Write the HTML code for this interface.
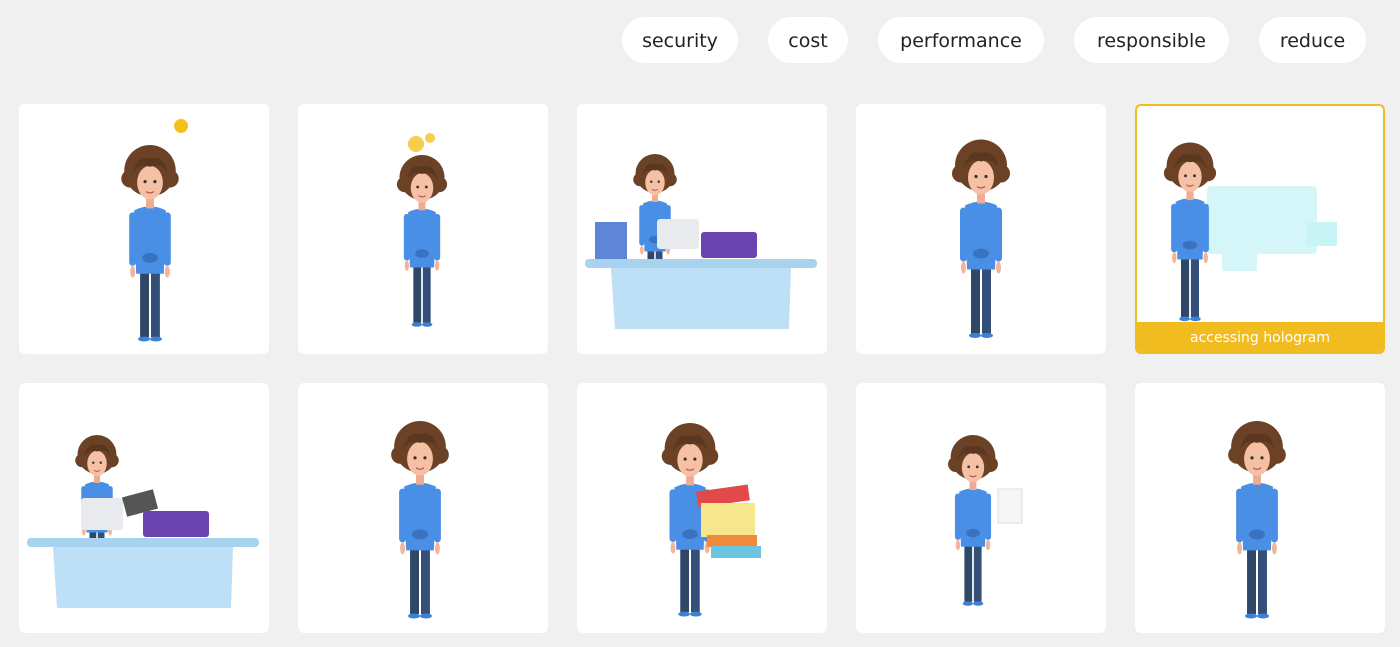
<!DOCTYPE html>
<html><head><meta charset="utf-8"><style>
*{margin:0;padding:0;box-sizing:border-box}
body{width:1400px;height:647px;background:#f0f0f0;position:relative;overflow:hidden;font-family:"DejaVu Sans","Liberation Sans",sans-serif}
.pill{position:absolute;top:17px;height:46px;border-radius:23px;background:#fff;color:#222;font-size:19px;line-height:48px;text-align:center}
.card{position:absolute;width:250px;height:250px;background:#fff;border-radius:6px;overflow:hidden}
.card svg{position:absolute;left:0;top:0}
.sel{border:2px solid #f0bc20}
.lab{position:absolute;left:0;right:0;bottom:0;height:30px;background:#f0bc1f;color:#fff;font-size:14px;line-height:32px;text-align:center}
</style></head><body>
<svg width="0" height="0" style="position:absolute">
<defs>
<symbol id="p" viewBox="0 0 60 200">
<rect x="20" y="128" width="9" height="66" fill="#2f4868"/><rect x="31" y="128" width="9" height="66" fill="#34507a"/>
<ellipse cx="24" cy="196" rx="6" ry="2.5" fill="#3b82d6"/><ellipse cx="36" cy="196" rx="6" ry="2.5" fill="#3b82d6"/>
<rect x="9" y="68" width="7" height="54" rx="3.5" fill="#4a8fe6"/><rect x="44" y="68" width="7" height="54" rx="3.5" fill="#4a8fe6"/>
<ellipse cx="12.5" cy="128" rx="2.5" ry="6" fill="#f3b49a"/><ellipse cx="47.5" cy="128" rx="2.5" ry="6" fill="#f3b49a"/>
<path d="M14 66 Q30 58 46 66 L44 130 L16 130 Z" fill="#4a8fe6"/>
<ellipse cx="30" cy="114" rx="8" ry="5" fill="#3a72c0"/>
<rect x="26" y="50" width="8" height="14" fill="#f0ac90"/>
<circle cx="30" cy="26" r="26" fill="#6b4226"/>
<circle cx="10" cy="34" r="9" fill="#6b4226"/><circle cx="50" cy="34" r="9" fill="#6b4226"/>
<ellipse cx="30" cy="38" rx="13" ry="17" fill="#f6c0a4"/>
<path d="M12 30 Q18 8 30 14 Q44 8 48 30 Q44 18 30 22 Q18 18 12 30Z" fill="#5a371e"/>
<circle cx="25" cy="37" r="1.6" fill="#333"/><circle cx="35" cy="37" r="1.6" fill="#333"/>
<path d="M26 47 Q30 50 34 47" stroke="#a55" stroke-width="1.2" fill="none"/>
</symbol>
<symbol id="desk" viewBox="0 0 232 70">
<rect x="0" y="0" width="232" height="9" rx="4" fill="#a8d3ef"/>
<path d="M26 9 H206 L204 70 H30Z" fill="#bde0f6"/>
</symbol>
</defs></svg>

<div class="pill" style="left:622px;width:116px">security</div>
<div class="pill" style="left:768px;width:80px">cost</div>
<div class="pill" style="left:878px;width:166px">performance</div>
<div class="pill" style="left:1074px;width:155px">responsible</div>
<div class="pill" style="left:1259px;width:107px">reduce</div>

<div class="card" style="left:19px;top:104px"><svg width="250" height="250">
<circle cx="162" cy="22" r="7" fill="#f4c020"/><use href="#p" x="101" y="41" width="60" height="198"/></svg></div>

<div class="card" style="left:298px;top:104px"><svg width="250" height="250">
<circle cx="118" cy="40" r="8" fill="#f6cf4c"/><circle cx="132" cy="34" r="5" fill="#f6cf4c"/>
<use href="#p" x="98" y="51" width="52" height="173"/></svg></div>

<div class="card" style="left:577px;top:104px"><svg width="250" height="250">
<use href="#p" x="54" y="50" width="48" height="150"/>
<rect x="18" y="118" width="32" height="38" fill="#5f86d6"/>
<rect x="80" y="115" width="42" height="30" rx="3" fill="#e8eaee"/>
<rect x="124" y="128" width="56" height="26" rx="3" fill="#6a45b0"/>
<use href="#desk" x="8" y="155" width="232" height="70"/></svg></div>

<div class="card" style="left:856px;top:104px"><svg width="250" height="250">
<use href="#p" x="95" y="35" width="60" height="201"/></svg></div>

<div class="card sel" style="left:1135px;top:104px"><svg width="246" height="246">
<rect x="70" y="80" width="110" height="68" rx="4" fill="#c9f4f6" opacity=".8"/>
<rect x="170" y="116" width="30" height="24" fill="#c9f4f6"/>
<rect x="85" y="145" width="35" height="20" fill="#d5f6f8"/>
<use href="#p" x="26" y="33" width="54" height="187"/></svg>
<div class="lab">accessing hologram</div></div>

<div class="card" style="left:19px;top:383px"><svg width="250" height="250">
<use href="#p" x="54" y="52" width="48" height="150"/>
<rect x="62" y="115" width="42" height="32" rx="3" fill="#e8eaee"/>
<rect x="105" y="110" width="32" height="20" fill="#555" transform="rotate(-15 121 120)"/>
<rect x="124" y="128" width="66" height="26" rx="3" fill="#6a45b0"/>
<use href="#desk" x="8" y="155" width="232" height="70"/></svg></div>

<div class="card" style="left:298px;top:383px"><svg width="250" height="250">
<use href="#p" x="92" y="38" width="60" height="199"/></svg></div>

<div class="card" style="left:577px;top:383px"><svg width="250" height="250">
<use href="#p" x="83" y="40" width="60" height="195"/>
<rect x="120" y="105" width="52" height="16" fill="#e24a4a" transform="rotate(-8 146 113)"/>
<rect x="124" y="120" width="54" height="34" fill="#f6e68c"/>
<rect x="130" y="152" width="50" height="12" fill="#ef8a3c"/>
<rect x="134" y="163" width="50" height="12" fill="#6cc3df"/></svg></div>

<div class="card" style="left:856px;top:383px"><svg width="250" height="250">
<use href="#p" x="91" y="52" width="52" height="172"/>
<rect x="142" y="106" width="24" height="34" fill="#f6f6f8" stroke="#ddd"/></svg></div>

<div class="card" style="left:1135px;top:383px"><svg width="250" height="250">
<use href="#p" x="92" y="38" width="60" height="199"/></svg></div>
</body></html>
